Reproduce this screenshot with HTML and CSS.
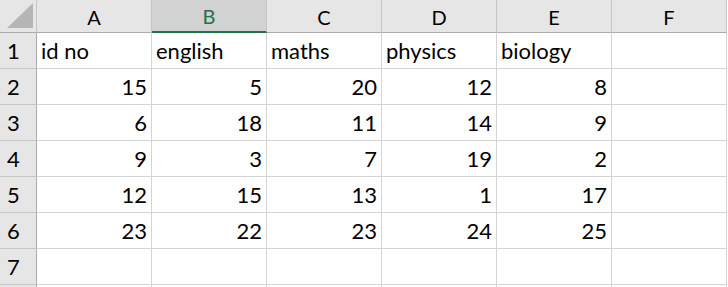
FILE: index.html
```html
<!DOCTYPE html>
<html lang="en">
<head>
  <meta charset="UTF-8" />
  <title>Sheet1</title>
  <link rel="stylesheet" href="styles.css">
</head>
<body>

  <div class="sheet">
    <!-- column headings -->
    <div class="corner">
      <svg width="36" height="32" viewBox="0 0 36 32"><polygon points="7,28 33,28 33,3" fill="#b5b5b5"/></svg>
    </div>
    <div class="col-head">A</div>
    <div class="col-head selected">B</div>
    <div class="col-head">C</div>
    <div class="col-head">D</div>
    <div class="col-head">E</div>
    <div class="col-head">F</div>

    <div class="row-head">1</div>
    <div class="cell">id no</div>
    <div class="cell">english</div>
    <div class="cell">maths</div>
    <div class="cell">physics</div>
    <div class="cell">biology</div>
    <div class="cell"></div>

    <div class="row-head">2</div>
    <div class="cell num">15</div>
    <div class="cell num">5</div>
    <div class="cell num">20</div>
    <div class="cell num">12</div>
    <div class="cell num">8</div>
    <div class="cell"></div>

    <div class="row-head">3</div>
    <div class="cell num">6</div>
    <div class="cell num">18</div>
    <div class="cell num">11</div>
    <div class="cell num">14</div>
    <div class="cell num">9</div>
    <div class="cell"></div>

    <div class="row-head">4</div>
    <div class="cell num">9</div>
    <div class="cell num">3</div>
    <div class="cell num">7</div>
    <div class="cell num">19</div>
    <div class="cell num">2</div>
    <div class="cell"></div>

    <div class="row-head">5</div>
    <div class="cell num">12</div>
    <div class="cell num">15</div>
    <div class="cell num">13</div>
    <div class="cell num">1</div>
    <div class="cell num">17</div>
    <div class="cell"></div>

    <div class="row-head">6</div>
    <div class="cell num">23</div>
    <div class="cell num">22</div>
    <div class="cell num">23</div>
    <div class="cell num">24</div>
    <div class="cell num">25</div>
    <div class="cell"></div>

    <div class="row-head">7</div>
    <div class="cell"></div>
    <div class="cell"></div>
    <div class="cell"></div>
    <div class="cell"></div>
    <div class="cell"></div>
    <div class="cell"></div>

    <!-- row 8, only its top edge shows -->
    <div class="row-head"></div>
    <div class="cell"></div>
    <div class="cell"></div>
    <div class="cell"></div>
    <div class="cell"></div>
    <div class="cell"></div>
    <div class="cell"></div>
  </div>

</body>
</html>
```

FILE: styles.css
```css
* {
  box-sizing: border-box;
}

body {
  margin: 0;
  background: #fff;
  font-family: Lato, "Open Sans", sans-serif;
  color: #000;
  overflow: hidden;
}

.sheet {
  display: grid;
  grid-template-columns: 37px repeat(6, 115px);
  grid-template-rows: 33px;
  grid-auto-rows: 36px;
}

.corner {
  background: #e6e6e6;
  border-right: 1px solid #c6c6c6;
  border-bottom: 1px solid #ababab;
}

.corner svg {
  display: block;
}

.col-head {
  background: #e6e6e6;
  border-right: 1px solid #c6c6c6;
  border-bottom: 1px solid #ababab;
  text-align: center;
  font-size: 20px;
  line-height: 32px;
  padding-top: 1px;
}

.col-head.selected {
  background: #d2d2d2;
  color: #217346;
  border-bottom: 2px solid #217346;
  line-height: 31px;
}

.row-head {
  background: #e6e6e6;
  border-right: 1px solid #ababab;
  border-bottom: 1px solid #c6c6c6;
  font-size: 22px;
  line-height: 35px;
  padding-left: 7px;
}

.cell {
  border-right: 1px solid #d4d4d4;
  border-bottom: 1px solid #d4d4d4;
  font-size: 22px;
  line-height: 35px;
  padding: 0 4px;
  white-space: nowrap;
  overflow: hidden;
}

.cell.num {
  text-align: right;
}
```
